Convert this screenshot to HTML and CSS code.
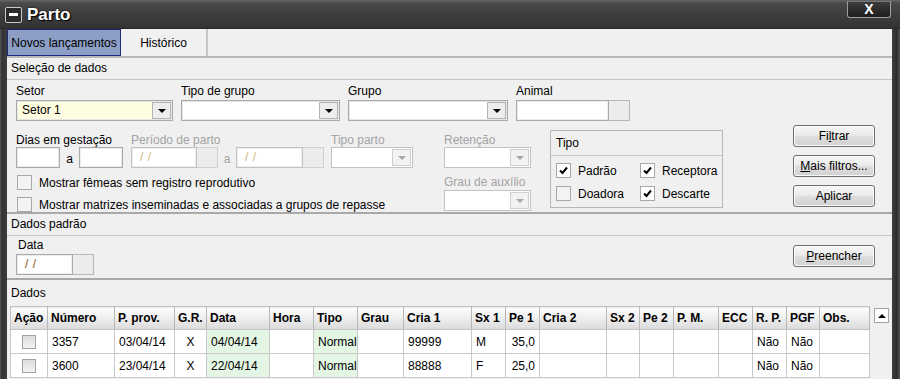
FILE: index.html
```html
<!DOCTYPE html>
<html lang="pt">
<head>
  <meta charset="UTF-8">
  <title>Parto</title>
  <link rel="stylesheet" href="styles.css">
</head>
<body>
<div class="window">
  <div class="titlebar">
    <span class="sys-icon"></span>
    <span class="title">Parto</span>
    <span class="close-btn">X</span>
  </div>

  <div class="client">
    <div class="tabs">
      <div class="tab tab-active">Novos lançamentos</div>
      <div class="tab tab-hist">Histórico</div>
    </div>

    <!-- Seleção de dados -->
    <div class="section">
      <div class="section-title">Seleção de dados</div>
      <div class="sel-body">
        <div class="sel-main">
          <div class="row1">
            <div class="field w-setor">
              <span class="lbl">Setor</span>
              <div class="combo combo-yellow"><span class="combo-text">Setor 1</span><span class="combo-btn"><i class="arrow"></i></span></div>
            </div>
            <div class="field w-tgrupo">
              <span class="lbl">Tipo de grupo</span>
              <div class="combo"><span class="combo-text"></span><span class="combo-btn"><i class="arrow"></i></span></div>
            </div>
            <div class="field w-grupo">
              <span class="lbl">Grupo</span>
              <div class="combo"><span class="combo-text"></span><span class="combo-btn"><i class="arrow"></i></span></div>
            </div>
            <div class="field">
              <span class="lbl">Animal</span>
              <div class="date"><span class="txt w-animal"></span><span class="side"></span></div>
            </div>
          </div>

          <div class="row2">
            <div class="filters">
              <div class="cell">
                <span class="lbl">Dias em gestação</span>
                <div class="range">
                  <span class="txt w-dias"></span><span class="sep">a</span><span class="txt w-dias"></span>
                </div>
              </div>
              <div class="cell disabled">
                <span class="lbl">Período de parto</span>
                <div class="range">
                  <div class="date"><span class="txt mask w-per">/ /</span><span class="side"></span></div>
                  <span class="sep sep-per">a</span>
                  <div class="date"><span class="txt mask w-per2">/ /</span><span class="side"></span></div>
                </div>
              </div>
              <div class="cell disabled">
                <span class="lbl">Tipo parto</span>
                <div class="combo w-tparto"><span class="combo-text"></span><span class="combo-btn"><i class="arrow"></i></span></div>
              </div>
              <div class="cell disabled">
                <span class="lbl">Retenção</span>
                <div class="combo w-ret"><span class="combo-text"></span><span class="combo-btn"><i class="arrow"></i></span></div>
              </div>

              <div class="checks">
                <label class="check-row"><span class="chk"></span>Mostrar fêmeas sem registro reprodutivo</label>
                <label class="check-row"><span class="chk"></span>Mostrar matrizes inseminadas e associadas a grupos de repasse</label>
              </div>
              <div class="cell cell-grau disabled">
                <span class="lbl">Grau de auxílio</span>
                <div class="combo w-ret"><span class="combo-text"></span><span class="combo-btn"><i class="arrow"></i></span></div>
              </div>
            </div>

            <div class="tipo-box">
              <div class="tipo-title">Tipo</div>
              <div class="tipo-grid">
                <label class="check-row"><span class="chk checked"><svg viewBox="0 0 13 13"><path d="M3 6.5 L5.5 9 L10 3.5"/></svg></span>Padrão</label>
                <label class="check-row"><span class="chk checked"><svg viewBox="0 0 13 13"><path d="M3 6.5 L5.5 9 L10 3.5"/></svg></span>Receptora</label>
                <label class="check-row"><span class="chk"></span>Doadora</label>
                <label class="check-row"><span class="chk checked"><svg viewBox="0 0 13 13"><path d="M3 6.5 L5.5 9 L10 3.5"/></svg></span>Descarte</label>
              </div>
            </div>
          </div>
        </div>

        <div class="buttons">
          <div class="btn">Fi<u>l</u>trar</div>
          <div class="btn"><u>M</u>ais filtros...</div>
          <div class="btn">Aplicar</div>
        </div>
      </div>
    </div>

    <!-- Dados padrão -->
    <div class="section">
      <div class="section-title">Dados padrão</div>
      <div class="padrao-body">
        <div class="field">
          <span class="lbl lbl-data">Data</span>
          <div class="date"><span class="txt mask w-data">/ /</span><span class="side"></span></div>
        </div>
        <div class="btn btn-fill"><u>P</u>reencher</div>
      </div>
    </div>

    <!-- Dados -->
    <div class="section">
      <div class="section-title title-dados">Dados</div>
      <div class="grid-wrap">
        <table class="data-table">
          <colgroup>
            <col style="width:37px"><col style="width:67px"><col style="width:60px"><col style="width:32px">
            <col style="width:63px"><col style="width:44px"><col style="width:44px"><col style="width:46px">
            <col style="width:68px"><col style="width:34px"><col style="width:34px"><col style="width:67px">
            <col style="width:33px"><col style="width:34px"><col style="width:45px"><col style="width:34px">
            <col style="width:34px"><col style="width:33px"><col style="width:50px">
          </colgroup>
          <thead>
          <tr>
            <th>Ação</th><th>Número</th><th>P. prov.</th><th>G.R.</th><th>Data</th><th>Hora</th>
            <th>Tipo</th><th>Grau</th><th>Cria 1</th><th>Sx 1</th><th>Pe 1</th><th>Cria 2</th>
            <th>Sx 2</th><th>Pe 2</th><th>P. M.</th><th>ECC</th><th>R. P.</th><th>PGF</th><th>Obs.</th>
          </tr>
          </thead>
          <tbody>
          <tr>
            <td class="center"><span class="row-chk"></span></td><td>3357</td><td>03/04/14</td><td class="center">X</td>
            <td class="green">04/04/14</td><td></td><td class="green">Normal</td><td></td><td>99999</td>
            <td>M</td><td class="num">35,0</td><td></td><td></td><td></td><td></td><td></td>
            <td>Não</td><td>Não</td><td></td>
          </tr>
          <tr>
            <td class="center"><span class="row-chk"></span></td><td>3600</td><td>23/04/14</td><td class="center">X</td>
            <td class="green">22/04/14</td><td></td><td class="green">Normal</td><td></td><td>88888</td>
            <td>F</td><td class="num">25,0</td><td></td><td></td><td></td><td></td><td></td>
            <td>Não</td><td>Não</td><td></td>
          </tr>
          </tbody>
        </table>
        <div class="vscroll">
          <span class="scroll-up"><i class="arrow-up"></i></span>
        </div>
      </div>
    </div>
  </div>
</div>
</body>
</html>
```

FILE: styles.css
```css
:root {
  --panel: #f0f0f0;
  --field-border: #a9a9a9;
  --line: #c4c4c4;
  --disabled: #a3a3a3;
}

* {
  box-sizing: border-box;
  margin: 0;
  padding: 0;
}

body {
  font-family: 'Liberation Sans', Arial, sans-serif;
  font-size: 12px;
  color: #000;
  background: #3a3a3a;
  overflow: hidden;
}

.window {
  width: 900px;
  height: 379px;
  overflow: hidden;
  background: linear-gradient(90deg, #5a5a5a 0, #333 2px, #3c3c3c 6px, #3c3c3c 893px, #2c2c2c 897px, #555 900px);
}

/* title bar */
.titlebar {
  height: 29px;
  display: flex;
  align-items: center;
  padding-left: 5px;
  background: linear-gradient(#666 0, #4a4a4a 3px, #3e3e3e 14px, #333 28px, #1e1e1e 29px);
}

.sys-icon {
  width: 17px;
  height: 16px;
  border: 1px solid #c8c8c8;
  border-radius: 2px;
  background: #2b2b2b;
  display: flex;
  align-items: center;
  justify-content: center;
}

.sys-icon::before {
  content: "";
  width: 9px;
  height: 3px;
  background: #fff;
}

.title {
  margin-left: 5px;
  color: #fff;
  font-weight: bold;
  font-size: 17px;
  text-shadow: 1px 1px 1px #000, 0 0 2px #000;
}

.close-btn {
  margin-left: auto;
  margin-right: 9px;
  align-self: flex-start;
  margin-top: 1px;
  width: 44px;
  height: 17px;
  border: 1px solid #a0a0a0;
  border-top-color: #777;
  border-radius: 0 0 3px 3px;
  background: linear-gradient(#3c3c3c, #1d1d1d);
  color: #fff;
  font-weight: bold;
  font-size: 14px;
  line-height: 15px;
  text-align: center;
}

/* client area */
.client {
  margin: 0 8px 0 7px;
  height: 350px;
  overflow: hidden;
  background: var(--panel);
}

.tabs {
  display: flex;
  height: 29px;
  border-bottom: 2px solid #b9b9b9;
}

.tab {
  height: 27px;
  display: flex;
  align-items: center;
  justify-content: center;
  font-size: 12px;
}

.tab-active {
  width: 114px;
  background: #8c9ec5;
  border: 1px solid #1d2b7c;
}

.tab-hist {
  width: 87px;
  border-right: 2px solid #c6c6c6;
}

.section + .section {
  border-top: 2px solid #a9a9a9;
}

.section-title {
  height: 22px;
  line-height: 21px;
  padding-left: 4px;
  border-bottom: 1px solid var(--line);
}

/* generic widgets */
.lbl {
  display: block;
  height: 16px;
  line-height: 14px;
  white-space: nowrap;
}

.disabled .lbl {
  color: var(--disabled);
}

.combo {
  display: flex;
  height: 21px;
  border: 1px solid var(--field-border);
  background: #fff;
  box-shadow: inset 0 0 0 1px #e6e6e6;
}

.combo-yellow {
  background: #fffde1;
}

.combo-text {
  flex: 1;
  padding-left: 5px;
  line-height: 19px;
}

.combo-btn {
  width: 19px;
  margin: 1px;
  border: 1px solid #b4b4b4;
  background: #ededed;
  display: flex;
  align-items: center;
  justify-content: center;
}

.arrow {
  width: 0;
  height: 0;
  border-left: 4px solid transparent;
  border-right: 4px solid transparent;
  border-top: 4px solid #000;
}

.disabled .combo {
  border-color: #c2c2c2;
  box-shadow: none;
}

.disabled .combo-btn {
  border-color: #cfcfcf;
  background: #f2f2f2;
}

.disabled .arrow {
  border-top-color: #a8a8a8;
}

.txt {
  display: block;
  height: 21px;
  border: 1px solid var(--field-border);
  background: #fff;
  box-shadow: inset 0 0 0 1px #ececec;
  padding-left: 8px;
  line-height: 19px;
}

.mask {
  color: #8b5a10;
  white-space: pre;
  word-spacing: 1px;
}

.disabled .txt {
  border-color: #c4c4c4;
  color: #d4b37a;
}

.date {
  display: flex;
}

.side {
  width: 21px;
  height: 21px;
  border: 1px solid #b7b7b7;
  border-left: none;
  background: #ececec;
}

.disabled .side {
  border-color: #cfcfcf;
}

.chk {
  width: 15px;
  height: 15px;
  flex: none;
  border: 1px solid #a8a8a8;
  background: #f3f3f3;
  margin-right: 7px;
  display: flex;
  align-items: center;
  justify-content: center;
}

.chk.checked {
  background: #fff;
}

.chk svg {
  width: 13px;
  height: 13px;
}

.chk path {
  fill: none;
  stroke: #000;
  stroke-width: 2;
}

.check-row {
  display: flex;
  align-items: center;
  height: 15px;
  white-space: nowrap;
}

.btn {
  width: 82px;
  height: 22px;
  border: 1px solid #6f6f6f;
  border-radius: 3px;
  background: linear-gradient(#f7f7f7, #ebebeb 45%, #dcdcdc 55%, #d2d2d2);
  box-shadow: inset 0 0 0 1px #fafafa;
  text-align: center;
  line-height: 20px;
}

/* Seleção de dados */
.sel-body {
  height: 132px;
  display: flex;
}

.sel-main {
  padding: 4px 0 0 9px;
}

.row1 {
  display: flex;
  gap: 8px;
}

.w-setor { width: 157px; }
.w-tgrupo { width: 159px; }
.w-grupo { width: 160px; }
.w-animal { width: 93px; }

.row2 {
  display: flex;
  margin-top: 9px;
}

.filters {
  display: grid;
  grid-template-columns: 115px 200px 113px 87px;
}

.filters .lbl {
  margin-top: 3px;
  height: 14px;
}

.range {
  display: flex;
}

.w-dias { width: 44px; }
.w-per { width: 66px; }
.w-per2 { width: 67px; }
.w-tparto { width: 82px; }
.w-ret { width: 87px; }

.sep {
  width: 19px;
  text-align: center;
  line-height: 24px;
}

.sep-per {
  width: 18px;
  color: var(--disabled);
}

.checks {
  grid-column: 1 / 4;
  display: flex;
  flex-direction: column;
  gap: 7px;
  margin-top: 4px;
  padding-left: 1px;
}

.cell-grau .lbl {
  margin-top: 4px;
  height: 15px;
}

.tipo-box {
  width: 173px;
  height: 78px;
  margin-left: 19px;
  border: 1px solid #b7b7b7;
}

.tipo-title {
  height: 25px;
  line-height: 25px;
  padding-left: 5px;
  border-bottom: 1px solid #c6c6c6;
}

.tipo-grid {
  display: grid;
  grid-template-columns: 84px 84px;
  row-gap: 8px;
  padding: 7px 0 0 5px;
}

.buttons {
  margin-left: auto;
  margin-right: 17px;
  padding-top: 45px;
  display: flex;
  flex-direction: column;
  gap: 8px;
}

/* Dados padrão */
.padrao-body {
  height: 42px;
  display: flex;
  padding: 2px 17px 0 9px;
}

.lbl-data {
  padding-left: 2px;
}

.w-data {
  width: 57px;
}

.btn-fill {
  margin-left: auto;
  margin-top: 7px;
}

/* Dados */
.title-dados {
  height: 26px;
  line-height: 26px;
  border-bottom: none;
}

.grid-wrap {
  display: flex;
  padding-left: 3px;
}

.data-table {
  width: 859px;
  border-collapse: collapse;
  table-layout: fixed;
}

.data-table th {
  height: 23px;
  padding: 0 3px;
  text-align: left;
  font-weight: bold;
  white-space: nowrap;
  background: linear-gradient(#fdfdfd, #eeeeee 50%, #dadada);
  border: 1px solid #c2c2c2;
  border-right-color: #b8b8b8;
}

.data-table td {
  height: 24px;
  padding: 0 4px;
  background: #fff;
  border: 1px solid #c9c9c9;
  white-space: nowrap;
}

.data-table td.green {
  background: #e3f6e3;
}

.data-table td.center {
  text-align: center;
}

.data-table td.num {
  text-align: right;
  padding-right: 4px;
}

.row-chk {
  display: inline-block;
  width: 14px;
  height: 14px;
  vertical-align: middle;
  border: 1px solid #9fa3ab;
  background: linear-gradient(#dcdcdc, #f4f4f4);
}

.vscroll {
  width: 21px;
  padding: 2px 0 0 4px;
}

.scroll-up {
  width: 15px;
  height: 15px;
  border: 1px solid #a4a4a4;
  background: #fff;
  display: flex;
  align-items: center;
  justify-content: center;
}

.arrow-up {
  width: 0;
  height: 0;
  border-left: 4px solid transparent;
  border-right: 4px solid transparent;
  border-bottom: 4px solid #000;
}
```
